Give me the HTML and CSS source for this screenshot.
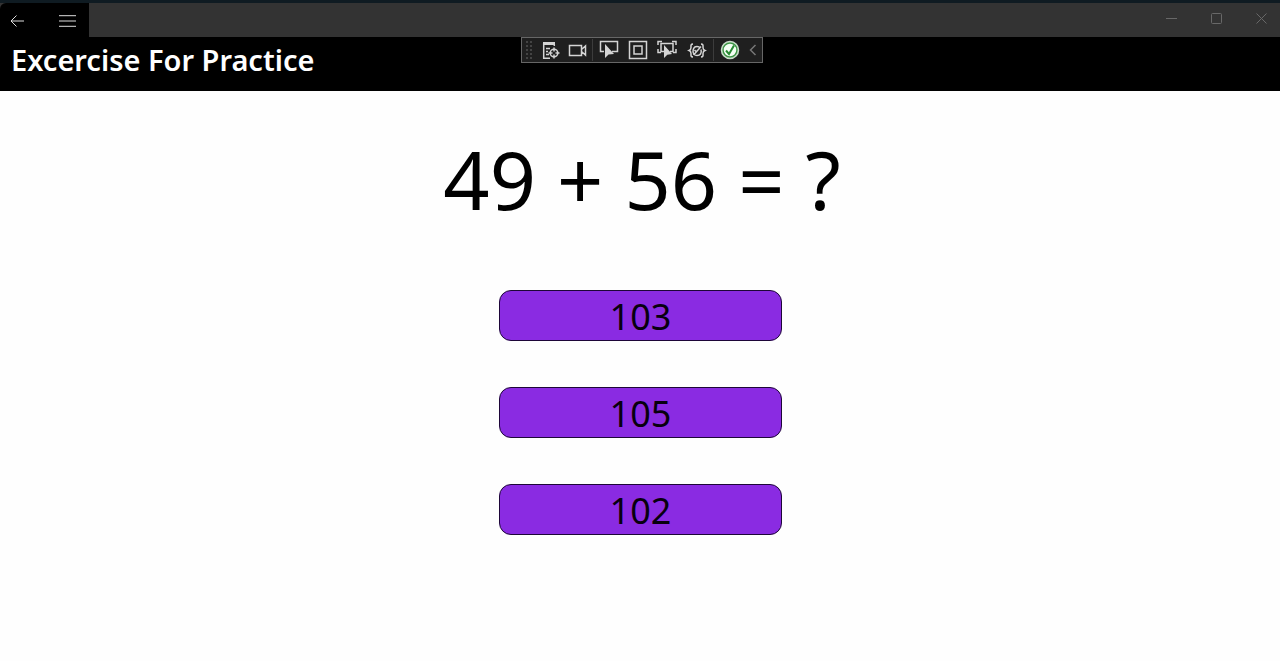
FILE: index.html
```
<!DOCTYPE html>
<html lang="en">
<head>
<meta charset="utf-8">
<meta name="viewport" content="width=device-width, initial-scale=1">
<title>Excercise For Practice</title>
<link rel="stylesheet" href="styles.css">
</head>
<body>
<div class="window">
  <div class="titlebar">
    <nav class="nav-buttons">
      <button class="icon-button back" aria-label="Back"><svg width="14" height="12" viewBox="0 0 14 12"><path d="M14 6H1M6.500 .5L1 6l5.500 5.500"/></svg></button>
      <button class="icon-button menu" aria-label="Menu"><svg width="17" height="12" viewBox="0 0 17 12"><path d="M0 .7h17M0 6h17M0 11.300h17"/></svg></button>
    </nav>
    <div class="caption-buttons">
      <button class="icon-button caption" aria-label="Minimize"><svg width="11" height="11" viewBox="0 0 11 11"><path d="M0 5.500h11"/></svg></button>
      <button class="icon-button caption" aria-label="Maximize"><svg width="11" height="11" viewBox="0 0 11 11"><rect x=".5" y=".5" width="10" height="10" rx="1"/></svg></button>
      <button class="icon-button caption" aria-label="Close"><svg width="11" height="11" viewBox="0 0 11 11"><path d="M.5 .5l10 10M10.500 .5l-10 10"/></svg></button>
    </div>
  </div>
  <header class="header"><h1 class="title">Excercise For Practice</h1></header>
  <div class="debug-bar" role="toolbar" aria-label="Debug tools">
    <span class="grip"></span>
    <button class="tool narrow" aria-label="Live visual tree"><svg width="20" height="20" viewBox="0 0 20 20"><path d="M2 2h12v3H2z" fill="currentColor" stroke="none"/><path d="M2.700 3v15.300H9M13.300 4v2M5 8.500h4M5 11.500h2M5 14.500h3"/><circle cx="13" cy="13" r="3.800"/><path d="M13 7.500v4M13 14.500v4M7.500 13h4M14.500 13h4"/></svg></button>
    <button class="tool narrow" aria-label="Record"><svg width="20" height="20" viewBox="0 0 20 20"><path d="M1.500 5.500h12v10h-12zM13.500 9.500l4-3.500v9l-4-3.500"/></svg></button>
    <span class="divider"></span>
    <button class="tool" aria-label="Select element"><svg width="20" height="20" viewBox="0 0 20 20"><path d="M5 11.500H1.500v-10h17v10H13"/><path d="M6 4v14l3.500-3.500L15 14z" fill="currentColor" stroke="none"/></svg></button>
    <button class="tool" aria-label="Display layout adorners"><svg width="20" height="20" viewBox="0 0 20 20"><rect x="1.500" y="1.500" width="17" height="17"/><rect x="6" y="6" width="8" height="8"/></svg></button>
    <button class="tool" aria-label="Track focused element"><svg width="20" height="20" viewBox="0 0 20 20"><path d="M7 11.500H4v-8h12v8h-3M1 5V1.500h4M15 1.500h4V5M1 9v3.500h3M16 12.500h3V9"/><path d="M7 5v13l3.300-3.300L15 14z" fill="currentColor" stroke="none"/></svg></button>
    <button class="tool wide" aria-label="Binding failures"><svg width="20" height="20" viewBox="0 0 20 20"><path d="M6 4C3.500 4 4 6 4 7.500S3.500 10 2 10.500c1.500.5 2 1.500 2 3S3.500 17 6 17M14 4c2.500 0 2 2 2 3.500s.5 2.500 2 3c-1.500.5-2 1.500-2 3s.5 3.500-2 3.500"/><path d="M7 14.500c-2-3-1-8 3-8 1.500 0 2.500.5 3 1.500M14 9.500c1 4-1 6-4 6-1 0-2-.3-3-1l7-8M7.500 10l2 2"/></svg></button>
    <span class="divider"></span>
    <button class="tool" aria-label="Hot reload"><svg width="20" height="20" viewBox="0 0 20 20"><circle class="ok-ring" cx="10" cy="10" r="8.500"/><circle class="ok-disc" cx="10" cy="10" r="7"/><path class="ok-tick" d="M6 10.500l3 3.500L14 5.500"/></svg></button>
    <button class="tool collapse" aria-label="Collapse"><svg width="8" height="12" viewBox="0 0 8 12"><path d="M6.500 1L1.500 6l5 5"/></svg></button>
  </div>
  <main class="exercise">
    <p class="question">49 + 56 = ?</p>
    <div class="answers">
      <button class="answer">103</button>
      <button class="answer">105</button>
      <button class="answer">102</button>
    </div>
  </main>
</div>
</body>
</html>
```
FILE: styles.css
```
* { box-sizing: border-box; }

body {
  margin: 0;
  background: #fefefe;
  color: #000;
  font-family: "Noto Sans", "Open Sans", sans-serif;
}

button {
  padding: 0;
  border: 0;
  background: none;
  color: inherit;
  font: inherit;
}

svg {
  display: block;
  fill: none;
  stroke: currentColor;
}

.window {
  position: relative;
  min-height: 100vh;
  border-top: 3px solid #0f1b22;
  background: #fefefe;
}

.titlebar {
  display: flex;
  justify-content: space-between;
  height: 34px;
  background: #333;
}

.nav-buttons {
  display: flex;
  gap: 11px;
  width: 89px;
  border-top-left-radius: 6px;
  background: #000;
  color: #ddd;
}

.icon-button {
  display: flex;
  align-items: center;
  justify-content: center;
}

.back,
.menu {
  width: 44px;
  height: 35px;
}

.back { width: 34px; }

.caption-buttons {
  display: flex;
  gap: 11px;
  padding-right: 2px;
  color: #686868;
}

.caption {
  width: 34px;
  height: 31px;
}

.header {
  height: 54px;
  padding: 0 11px;
  background: #000;
  color: #fff;
}

.title {
  margin: 0;
  font-size: 29px;
  font-weight: 600;
  line-height: 46px;
}

.debug-bar {
  position: absolute;
  top: 34px;
  left: 50%;
  display: flex;
  align-items: center;
  width: 242px;
  height: 26px;
  padding-left: 3px;
  border: 1px solid #666;
  background: #1f1f1f;
  color: #d4d4d4;
  transform: translateX(-119px);
}

.debug-bar svg { stroke-width: 1.5; }

.grip {
  width: 8px;
  height: 20px;
  margin-right: 4px;
  background: radial-gradient(circle, #444 1px, transparent 1px) 0 0 / 4px 4px;
}

.tool {
  display: flex;
  flex: none;
  align-items: center;
  justify-content: center;
  width: 29px;
}

.narrow { width: 27px; }
.wide { width: 31px; }

.divider {
  width: 1px;
  height: 22px;
  margin: 0 1px;
  background: #3c3c3c;
}

.collapse {
  width: 18px;
  color: #777;
}

.ok-ring { fill: #fff; stroke: #c8dcc8; }
.ok-disc { fill: #f4fff4; stroke: #3d9445; }
.ok-tick { stroke: #278a32; stroke-width: 2; }

.exercise {
  display: flex;
  flex-direction: column;
  align-items: center;
  padding: 33px 16px;
}

.question {
  margin: 0 0 56px;
  padding-left: 4px;
  font-size: 81px;
  line-height: 110px;
}

.answers {
  display: flex;
  flex-direction: column;
  gap: 46px;
  width: 283px;
  max-width: 100%;
}

.answer {
  height: 51px;
  padding: 2px 0 0 1px;
  border: 1px solid #1d0638;
  border-radius: 12px;
  background: #8a2be2;
  color: #08000f;
  font-size: 36px;
  line-height: 48px;
}
```
